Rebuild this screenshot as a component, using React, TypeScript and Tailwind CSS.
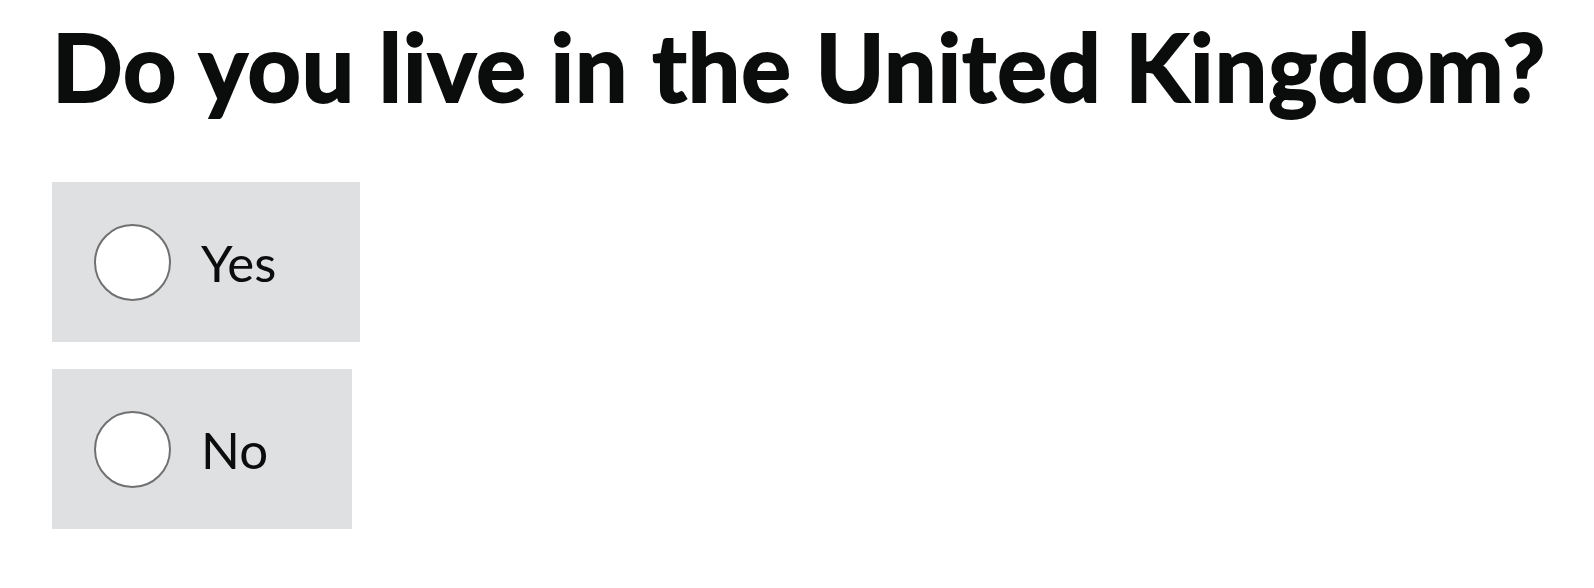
export default function App() {
  const options = ["Yes", "No"];
  return (
    <div className="min-h-screen bg-white pl-[52px] pt-[20px] font-['Lato',sans-serif] text-[#0b0c0c]">
      <h1 className="text-[93px] font-bold leading-none tracking-[1px] [-webkit-text-stroke:2px_#0b0c0c]">
        Do you live in the United Kingdom?
      </h1>
      <div className="mt-[69px] flex flex-col items-start gap-[27px]">
        {options.map((o) => (
          <label
            key={o}
            className="flex h-[160px] items-center bg-[#dee0e2] pl-[42px] pr-[84px]"
          >
            <span className="block size-[77px] rounded-full border-2 border-[#707070] bg-white" />
            <span className="ml-[30px] text-[51px] leading-none">{o}</span>
          </label>
        ))}
      </div>
    </div>
  );
}
